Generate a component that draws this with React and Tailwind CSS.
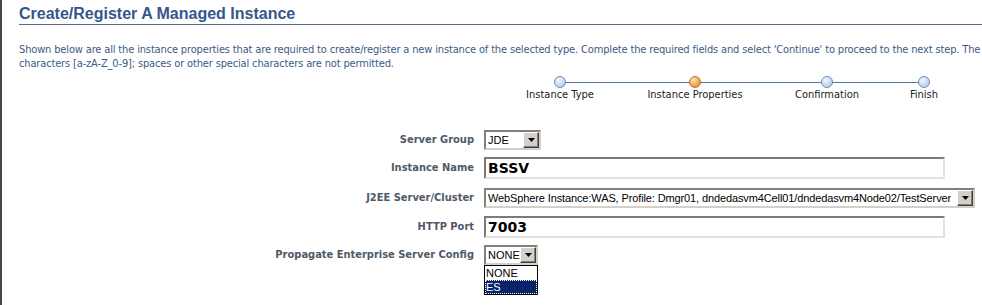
import React from "react";

const labelCls =
  "w-[465px] pr-[10px] text-right text-[11px] font-bold text-[#4e5a67] font-['DejaVu_Sans_Condensed','DejaVu_Sans',sans-serif] whitespace-nowrap";

function Arrow() {
  return (
    <div className="h-[16px] w-[16px] shrink-0 bg-[#d4d0c8] border border-t-white border-l-white border-r-[#404040] border-b-[#404040] flex items-center justify-center shadow-[inset_-1px_-1px_0_#808080]">
      <svg width="7" height="4" viewBox="0 0 7 4">
        <path d="M0 0h7L3.5 4z" fill="#000" />
      </svg>
    </div>
  );
}

function Select({ value, width, tight }) {
  return (
    <div
      className="h-[20px] bg-white border-2 border-t-[#808080] border-l-[#808080] border-r-[#d4d0c8] border-b-[#d4d0c8] flex items-center justify-between"
      style={{ width }}
    >
      <span
        className={
          tight
            ? "pl-[2px] text-[11px] tracking-[-0.12px] text-black font-['Liberation_Sans',sans-serif] whitespace-nowrap overflow-hidden"
            : "pl-[2px] text-[11px] text-black font-['Liberation_Sans',sans-serif] whitespace-nowrap overflow-hidden"
        }
      >
        {value}
      </span>
      <Arrow />
    </div>
  );
}

function Input({ value }) {
  return (
    <div className="h-[22px] w-[461px] bg-white border-2 border-t-[#7a7a7a] border-l-[#7a7a7a] border-r-[#e4e2dc] border-b-[#e4e2dc] flex items-center">
      <span className="pl-[2px] text-[14px] font-bold text-black font-['DejaVu_Sans',sans-serif] leading-none">
        {value}
      </span>
    </div>
  );
}

function Step({ label, active }) {
  return (
    <div className="flex flex-col items-center">
      <div
        className={
          active
            ? "relative z-10 h-[12px] w-[12px] rounded-full border border-[#c0712a] bg-[radial-gradient(circle_at_35%_30%,#fde3b8,#ef9a3a_70%,#de7f1f)]"
            : "relative z-10 h-[12px] w-[12px] rounded-full border border-[#6d8db5] bg-[radial-gradient(circle_at_35%_30%,#f2f7fd,#bcd3ec_70%,#a4c0df)]"
        }
      />
      <div className="text-[11px] leading-[14px] text-[#222] font-['DejaVu_Sans_Condensed','DejaVu_Sans',sans-serif] whitespace-nowrap">
        {label}
      </div>
    </div>
  );
}

export default function App() {
  return (
    <div className="min-h-[305px] w-[982px] bg-white border-l-2 border-[#474747] pl-[17px] font-['Liberation_Sans',sans-serif] overflow-hidden">
      <div className="h-[25px] pt-[5px] border-b border-[#5a6e8b]">
        <h1 className="text-[16px] leading-[18px] font-bold text-[#35578a]">
          Create/Register A Managed Instance
        </h1>
      </div>

      <p className="mt-[18px] text-[11px] leading-[14px] tracking-[-0.15px] text-[#3b5b86] font-['DejaVu_Sans_Condensed','DejaVu_Sans',sans-serif] whitespace-nowrap">
        Shown below are all the instance properties that are required to create/register a new instance of the selected type. Complete the required fields and select 'Continue' to proceed to the next step. The
        <br />
        characters [a-zA-Z_0-9]; spaces or other special characters are not permitted.
      </p>

      <div className="relative mt-[5px] ml-[491px] grid w-[464px] grid-cols-[100px_170px_94px_100px]">
        <div className="absolute left-[50px] right-[50px] top-[6px] h-px bg-[#56759f]" />
        <Step label="Instance Type" />
        <Step label="Instance Properties" active />
        <Step label="Confirmation" />
        <Step label="Finish" />
      </div>

      <div className="mt-[28px] flex flex-col">
        <div className="flex items-center">
          <div className={labelCls}>Server Group</div>
          <Select value="JDE" width={57} />
        </div>
        <div className="mt-[7px] flex items-center">
          <div className={labelCls}>Instance Name</div>
          <Input value="BSSV" />
        </div>
        <div className="mt-[9px] flex items-center">
          <div className={labelCls}>J2EE Server/Cluster</div>
          <Select
            value="WebSphere Instance:WAS, Profile: Dmgr01, dndedasvm4Cell01/dndedasvm4Node02/TestServer"
            width={491}
            tight
          />
        </div>
        <div className="mt-[8px] flex items-center">
          <div className={labelCls}>HTTP Port</div>
          <Input value="7003" />
        </div>
        <div className="mt-[7px] flex items-center">
          <div className={labelCls}>Propagate Enterprise Server Config</div>
          <div className="relative">
            <Select value="NONE" width={54} />
            <div className="absolute left-0 top-[20px] z-20 w-[54px] border border-black bg-white text-[11px] leading-[14px] font-['Liberation_Sans',sans-serif]">
              <div className="px-[1px] text-black">NONE</div>
              <div className="px-[1px] bg-[#0a246a] text-white outline-1 outline-dotted outline-offset-[-1px] outline-[#fff]">
                ES
              </div>
            </div>
          </div>
        </div>
      </div>
    </div>
  );
}
